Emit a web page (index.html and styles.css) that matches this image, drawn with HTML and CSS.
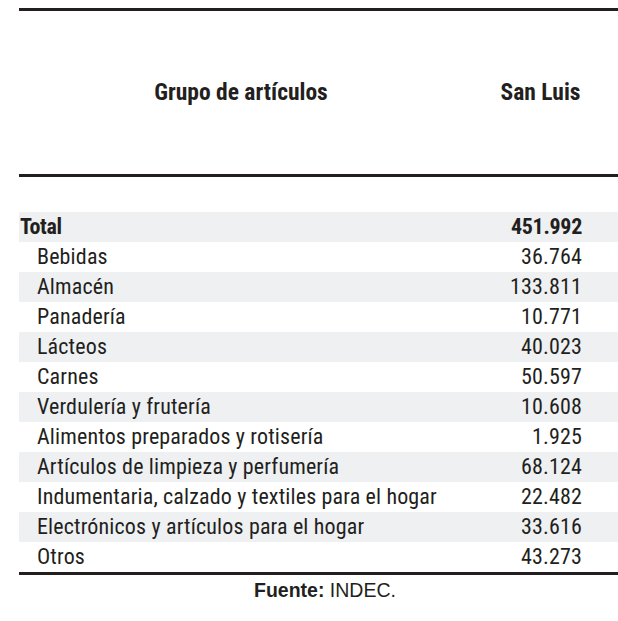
FILE: index.html
```html
<!DOCTYPE html>
<html lang="es">
<head>
<meta charset="utf-8">
<title>Grupo de artículos - San Luis</title>
<link rel="stylesheet" href="styles.css">
</head>
<body>
<div class="page">
  <table class="data">
    <thead>
      <tr>
        <th class="col-group">Grupo de artículos</th>
        <th class="col-value">San Luis</th>
      </tr>
    </thead>
    <tbody>
      <tr class="spacer"><td colspan="2"></td></tr>
      <tr class="shade total"><td class="label">Total</td><td class="num">451.992</td></tr>
      <tr><td class="label sub">Bebidas</td><td class="num">36.764</td></tr>
      <tr class="shade"><td class="label sub">Almacén</td><td class="num">133.811</td></tr>
      <tr><td class="label sub">Panadería</td><td class="num">10.771</td></tr>
      <tr class="shade"><td class="label sub">Lácteos</td><td class="num">40.023</td></tr>
      <tr><td class="label sub">Carnes</td><td class="num">50.597</td></tr>
      <tr class="shade"><td class="label sub">Verdulería y frutería</td><td class="num">10.608</td></tr>
      <tr><td class="label sub">Alimentos preparados y rotisería</td><td class="num">1.925</td></tr>
      <tr class="shade"><td class="label sub">Artículos de limpieza y perfumería</td><td class="num">68.124</td></tr>
      <tr><td class="label sub">Indumentaria, calzado y textiles para el hogar</td><td class="num">22.482</td></tr>
      <tr class="shade"><td class="label sub">Electrónicos y artículos para el hogar</td><td class="num">33.616</td></tr>
      <tr class="last"><td class="label sub">Otros</td><td class="num">43.273</td></tr>
    </tbody>
  </table>
  <p class="source"><strong>Fuente:</strong> INDEC.</p>
</div>
</body>
</html>
```

FILE: styles.css
```css
html, body {
  margin: 0;
  padding: 0;
  background: #ffffff;
}

.page {
  padding-top: 8px;
  padding-left: 19px;
  font-family: "Roboto", "Liberation Sans", sans-serif;
  font-stretch: 75%;
  color: #231f20;
}

.data {
  width: 599px;
  border-collapse: collapse;
  table-layout: fixed;
  font-size: 22px;
  letter-spacing: 0.15px;
}

.data thead tr {
  border-top: 3px solid #231f20;
  border-bottom: 3px solid #231f20;
}

.data th {
  height: 161px;
  padding: 0 0 2px;
  font-size: 23.5px;
  font-weight: bold;
  text-align: center;
  vertical-align: middle;
  letter-spacing: 0;
}

.col-group { width: 444px; }
.col-value { width: 155px; }

.spacer td {
  height: 35px;
  padding: 0;
}

.data tbody tr:not(.spacer) td {
  height: 30px;
  padding: 0;
  line-height: 30px;
  white-space: nowrap;
}

.shade { background: #eef0f2; }

.label { padding-left: 1px !important; }
.label.sub { padding-left: 18px !important; }

.num {
  text-align: right;
  padding-right: 36px !important;
}

.total td {
  font-weight: bold;
  letter-spacing: -0.3px;
}

.last { border-bottom: 3px solid #231f20; }

.source {
  margin: 2px 0 0;
  width: 612px;
  text-align: center;
  font-family: "Liberation Sans", Arial, sans-serif;
  font-stretch: 100%;
  font-size: 19.5px;
  line-height: 26px;
  color: #231f20;
}
```
